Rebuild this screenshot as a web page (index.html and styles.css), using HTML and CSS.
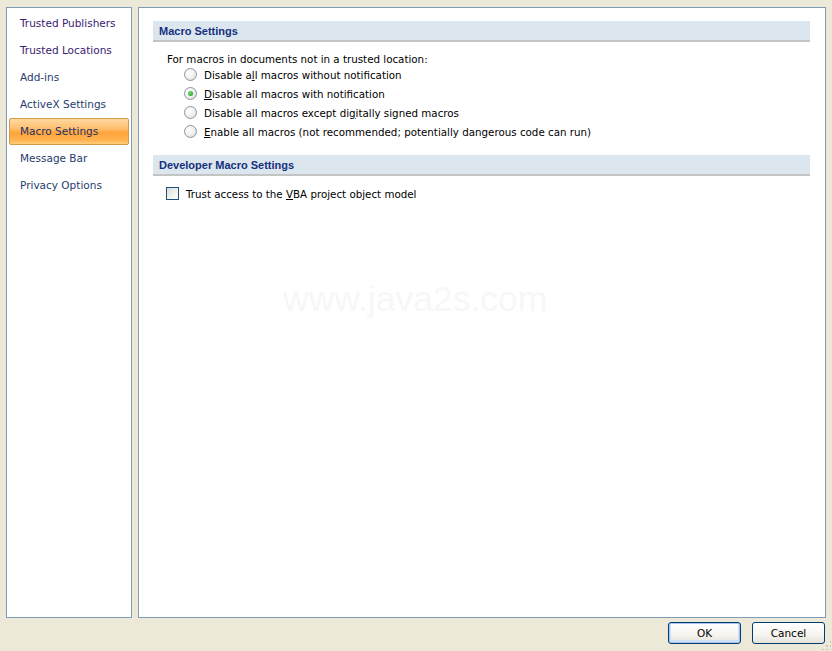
FILE: index.html
```html
<!DOCTYPE html>
<html lang="en">
<head>
    <meta charset="UTF-8">
    <title>Trust Center</title>
    <link rel="stylesheet" href="styles.css">
</head>
<body>
    <div class="main">
        <div class="sidebar">
            <div class="navitem visited">Trusted Publishers</div>
            <div class="navitem visited">Trusted Locations</div>
            <div class="navitem">Add-ins</div>
            <div class="navitem">ActiveX Settings</div>
            <div class="navitem selected">Macro Settings</div>
            <div class="navitem">Message Bar</div>
            <div class="navitem">Privacy Options</div>
        </div>
        <div class="content">
            <div class="band">Macro Settings</div>
            <div class="intro">For macros in documents not in a trusted location:</div>
            <div class="options">
                <div class="option"><span class="radio"></span><span>Disable a<u>l</u>l macros without notification</span></div>
                <div class="option"><span class="radio checked"></span><span><u>D</u>isable all macros with notification</span></div>
                <div class="option"><span class="radio"></span><span>Disable all macros except di<u>g</u>itally signed macros</span></div>
                <div class="option"><span class="radio"></span><span><u>E</u>nable all macros (not recommended; potentially dangerous code can run)</span></div>
            </div>
            <div class="band second">Developer Macro Settings</div>
            <div class="checkrow"><span class="checkbox"></span><span>Trust access to the <u>V</u>BA project object model</span></div>
            <div class="watermark">www.java2s.com</div>
        </div>
    </div>
    <div class="footer">
        <button class="btn default">OK</button>
        <button class="btn">Cancel</button>
        <span class="grip"></span>
    </div>
</body>
</html>
```

FILE: styles.css
```css
body{
    margin: 0;
    padding: 0;

    width: 832px;
    height: 651px;

    display: flex;
    flex-direction: column;

    background-color: #ece9d8;

    font-family: 'DejaVu Sans', Verdana, sans-serif;
    font-size: 10.3px;
    color: #000;

    overflow: hidden;
}

.main{
    display: flex;
    gap: 6px;

    height: 611px;
    padding: 7px 6px 0 6px;
}

.sidebar{
    width: 124px;

    padding-top: 2px;

    border: 1px solid #7f9db9;

    background-color: #fff;

    font-size: 10.5px;
}

.navitem{
    height: 27px;
    line-height: 27px;
    padding-left: 13px;

    color: #1f3c6e;
}
.navitem.visited{
    color: #3a2270;
}
.navitem.selected{
    height: 25px;
    line-height: 25px;
    margin: 0 2px;
    padding-left: 10px;

    border: 1px solid #d29a48;
    border-radius: 2px;

    background: linear-gradient(#ffd9a0 0%, #ffbf70 38%, #ffa43a 55%, #ffb450 85%, #ffcf80 100%);

    color: #23306a;
}

.content{
    position: relative;
    flex: 1;

    padding: 13px 15px 0 14px;

    border: 1px solid #7f9db9;

    background-color: #fff;
}

.band{
    height: 19px;
    line-height: 20px;
    padding-left: 6px;

    border-bottom: 2px solid #c4c4c4;

    background-color: #dce6ee;

    font-family: 'Liberation Sans', Arial, sans-serif;
    font-size: 11px;
    font-weight: bold;
    color: #15317e;
}
.band.second{
    margin-top: 14px;
}

.intro{
    height: 14px;
    line-height: 16px;
    margin-top: 9px;
    padding-left: 14px;
}

.options{
    padding-left: 31px;
}

.option, .checkrow{
    display: flex;
    align-items: center;

    height: 19px;
}

.radio{
    width: 11px;
    height: 11px;
    margin-right: 7px;

    border: 1px solid #8a96a8;
    border-radius: 50%;

    background: radial-gradient(circle at 35% 35%, #fff 0%, #f0f0ec 50%, #d6d6cf 100%);

    display: flex;
    align-items: center;
    justify-content: center;
}
.radio.checked::after{
    content: '';

    width: 5px;
    height: 5px;

    border-radius: 50%;

    background: radial-gradient(circle at 40% 40%, #7ee07e 0%, #2aa52a 70%);
}

.checkrow{
    margin-top: 8px;
    padding-left: 13px;
}

.checkbox{
    width: 11px;
    height: 11px;
    margin-right: 7px;

    border: 1px solid #1c5180;

    background: linear-gradient(135deg, #dcdcd6 0%, #f4f4f0 60%, #fff 100%);
}

.watermark{
    position: absolute;
    top: 271px;
    left: 144px;

    font-family: 'Liberation Sans', Arial, sans-serif;
    font-size: 35.5px;
    color: #f7f7f7;

    user-select: none;
}

.footer{
    position: relative;
    flex: 1;

    display: flex;
    justify-content: flex-end;
    align-items: flex-start;
    gap: 11px;

    padding: 4px 7px 0 0;
}

.btn{
    width: 73px;
    height: 22px;

    border: 1px solid #003c74;
    border-radius: 3px;

    background: linear-gradient(#ffffff 0%, #f5f4ef 60%, #e3e2da 100%);

    font-family: 'DejaVu Sans', Verdana, sans-serif;
    font-size: 10.5px;
    color: #000;
}
.btn.default{
    box-shadow: inset 0 0 0 1px #a8c4ec, inset 0 -1px 0 2px #cfe0f8;
}

.grip{
    position: absolute;
    right: 1px;
    bottom: 1px;

    width: 10px;
    height: 10px;

    background:
        radial-gradient(circle, #c8c5b6 1px, transparent 1.2px) 0 0 / 4px 4px;
    clip-path: polygon(100% 0, 100% 100%, 0 100%);
}
```
